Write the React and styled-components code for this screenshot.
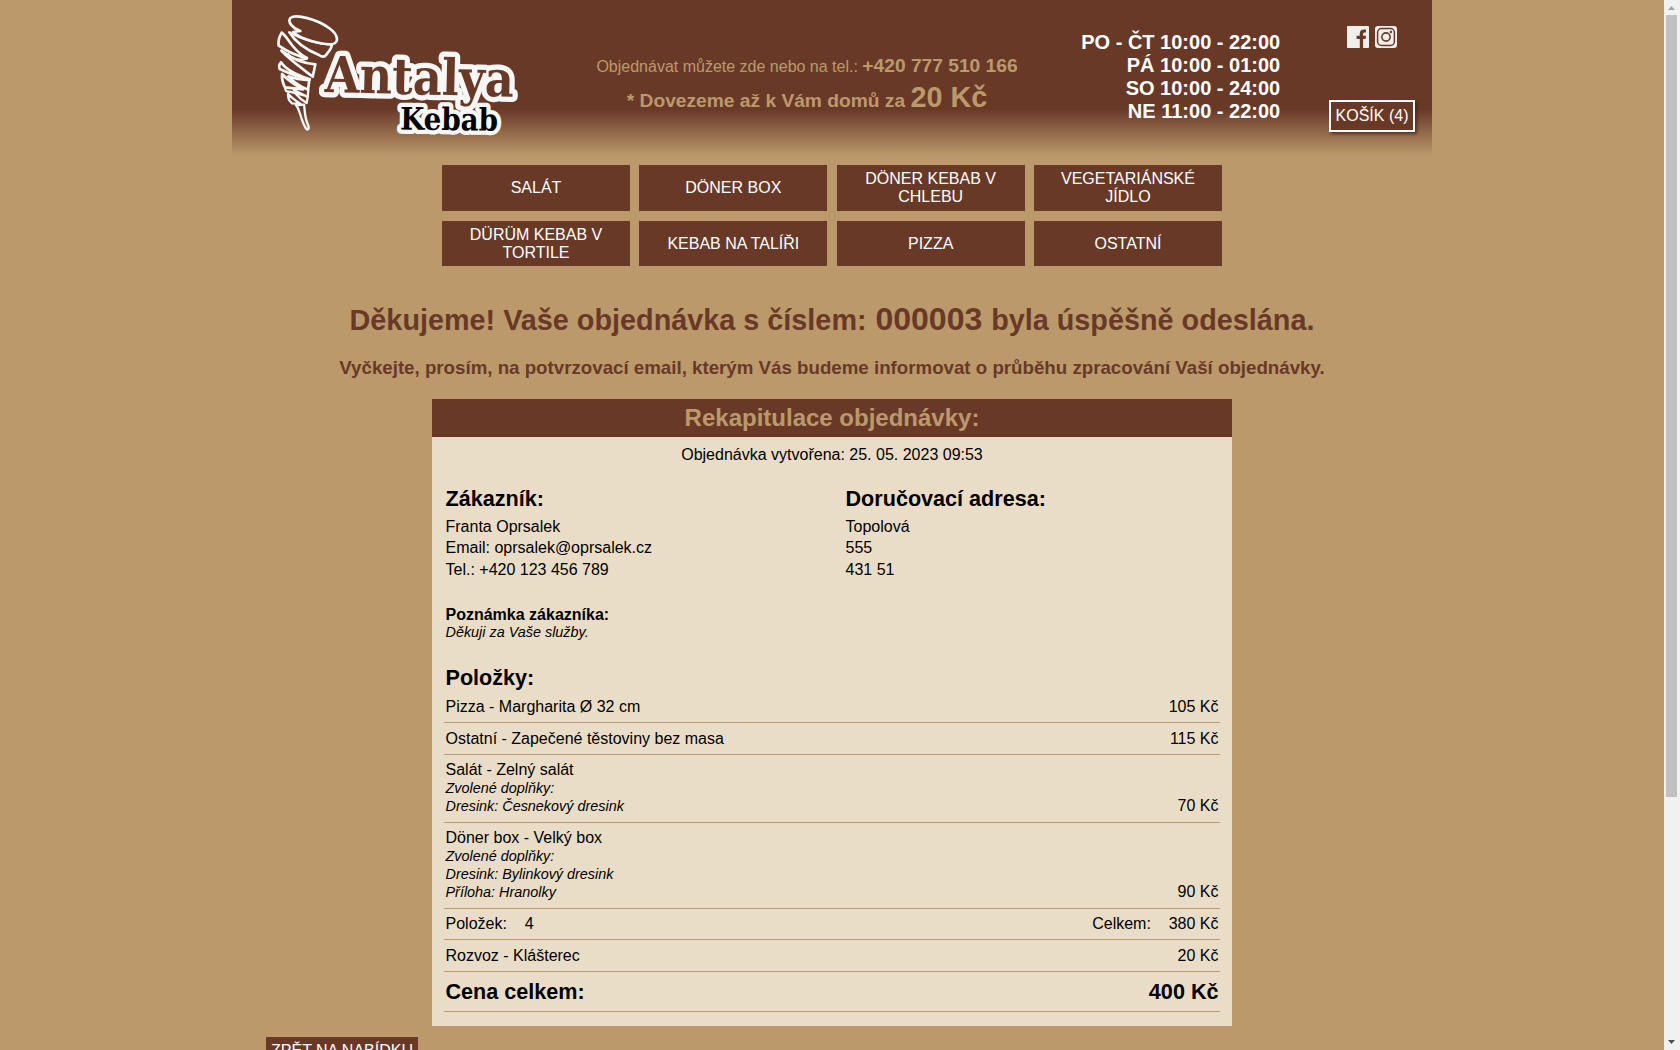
import React from 'react';
import styled, { createGlobalStyle } from 'styled-components';

const brown = '#693928';
const tan = '#bb996b';
const cream = '#eaddc7';

const GlobalStyle = createGlobalStyle`
  * { box-sizing: border-box; }
  html, body { margin: 0; padding: 0; overflow: hidden; background: ${tan}; }
  body { font: 16px/18px "Liberation Sans", Arial, sans-serif; color: #000; }
  h1, h2, h3, h4, p { margin: 0; }
`;

const Viewport = styled.div`
  display: flex;
  height: 1050px;
  overflow: hidden;
`;

const Page = styled.main`
  flex: 1;
  min-width: 0;
  display: flex;
  flex-direction: column;
  align-items: center;
  overflow: hidden;
`;

const Header = styled.header`
  flex: none;
  width: 1200px;
  height: 156px;
  display: flex;
  align-items: flex-start;
  background: linear-gradient(${brown} 70%, ${tan} 100%);
`;

const LogoBox = styled.a`
  width: 320px;
  height: 156px;
  display: block;
`;

const LogoText = styled.text`
  font-family: "DejaVu Serif Condensed", "DejaVu Serif", serif;
  font-weight: bold;
  font-size: ${p => p.$size}px;
  fill: ${p => p.$fill};
  stroke: ${p => p.$stroke || 'none'};
  stroke-width: ${p => p.$width || 0}px;
  stroke-linejoin: round;
`;

const Contact = styled.div`
  width: 510px;
  padding-top: 55px;
  text-align: center;
  color: ${tan};
`;

const Phone = styled.p`
  line-height: 22px;
  strong { font-size: 19.2px; }
`;

const Delivery = styled.p`
  margin-top: 2px;
  font-size: 19.2px;
  font-weight: bold;
  line-height: 34px;
  span { font-size: 28.8px; }
`;

const Hours = styled.div`
  width: 218.2px;
  padding-top: 31px;
  text-align: right;
  font-size: 20px;
  font-weight: bold;
  line-height: 23px;
  color: #fff;
`;

const Side = styled.div`
  flex: 1;
  padding: 26px 17px 0 0;
  display: flex;
  flex-direction: column;
  align-items: flex-end;
`;

const Social = styled.div`
  display: flex;
  gap: 6px;
  height: 22px;
  margin-right: 18px;
`;

const Cart = styled.a`
  width: 86px;
  height: 32px;
  margin-top: 52px;
  border: 2px solid #fff;
  background: ${brown};
  color: #fff;
  line-height: 28px;
  text-align: center;
  white-space: nowrap;
  box-shadow: 2px 2px 3px rgba(60, 25, 15, 0.7);
`;

const Menu = styled.nav`
  flex: none;
  width: 780px;
  margin-top: 9px;
  display: grid;
  grid-template-columns: repeat(4, 188px);
  grid-template-rows: 46px 45px;
  justify-content: space-between;
  row-gap: 10px;
`;

const MenuItem = styled.a`
  display: flex;
  align-items: center;
  justify-content: center;
  padding: 0 20px;
  background: ${brown};
  color: #fff;
  text-align: center;
`;

const Thanks = styled.h1`
  margin-top: 35px;
  font-size: 28.8px;
  line-height: 36px;
  color: ${brown};
  white-space: nowrap;
  span { font-size: 32px; }
`;

const Notice = styled.h2`
  margin-top: 19px;
  font-size: 18.72px;
  line-height: 22px;
  color: ${brown};
  white-space: nowrap;
`;

const Card = styled.section`
  flex: none;
  width: 800px;
  height: 627px;
  margin-top: 20px;
  background: ${cream};
`;

const CardTitle = styled.h2`
  height: 38px;
  background: ${brown};
  color: ${tan};
  font-size: 24px;
  line-height: 38px;
  text-align: center;
`;

const CardBody = styled.div`
  padding: 9px 12px 0;
`;

const Created = styled.p`
  text-align: center;
`;

const Columns = styled.div`
  display: grid;
  grid-template-columns: 400px 1fr;
  margin-top: 22px;
  padding-left: 1.5px;
`;

const Heading = styled.h3`
  font-size: 21.6px;
  line-height: 26px;
`;

const Details = styled.div`
  padding: 3.75px 0 0.25px;
  line-height: 21.5px;
`;

const Note = styled.div`
  margin-top: 25px;
  padding-left: 1.5px;
  strong { display: block; }
`;

const Small = styled.p`
  font-size: 14.4px;
  font-style: italic;
  line-height: 18px;
`;

const NoteText = styled(Small)`
  margin-top: -1px;
`;

const ItemsHeading = styled(Heading)`
  margin-top: 24.5px;
  padding-left: 1.5px;
`;

const Row = styled.div`
  display: flex;
  justify-content: space-between;
  align-items: flex-end;
  height: ${p => p.$height}px;
  padding: 0 1.5px ${p => p.$bottom || 6}px;
  border-bottom: 1px solid ${tan};
`;

const Total = styled(Row)`
  font-size: 21.6px;
  font-weight: bold;
  line-height: 26px;
`;

const Pair = styled.span`
  display: flex;
  gap: 17.8px;
`;

const Back = styled.a`
  flex: none;
  align-self: flex-start;
  margin: 11px 0 0 266px;
  width: 152px;
  height: 32px;
  background: ${brown};
  color: #fff;
  line-height: 28px;
  text-align: center;
  white-space: nowrap;
`;

const Scrollbar = styled.div`
  flex: none;
  width: 16px;
  height: 1050px;
  padding: 5px 3px 6px 2px;
  display: flex;
  flex-direction: column;
  align-items: center;
  background: #f1f1f1;
`;

const Thumb = styled.div`
  width: 11px;
  height: 782px;
  margin: 5px 0 auto;
  background: #c1c1c1;
`;

function Logo() {
  return (
    <svg width="320" height="156" viewBox="232 0 320 156" aria-label="Antalya Kebab">
      <g transform="translate(229.7 0) scale(.33333)" fill="none" stroke="#f7f7f5" strokeWidth="8" strokeLinejoin="round" strokeLinecap="round">
        <path d="M212 93 C190 86 172 66 182 54 C199 41 262 58 298 84 C326 104 329 127 309 132 C284 136 210 118 190 96 L212 93" />
        <path d="M179 97 C196 124 220 146 268 165 C276 171 283 172 288 166 C297 154 305 147 306 136" />
        <path d="M180 98 C212 116 262 133 306 134" strokeWidth="6" />
        <path d="M156 98 C150 108 145 126 147 137 C172 154 204 169 232 174 M156 98 C168 106 177 124 189 138 C204 156 220 168 232 174" />
        <path d="M155 152 C174 174 212 202 249 230 L257 193 C228 191 196 184 155 152" />
        <path d="M176 162 C186 178 204 182 232 176" strokeWidth="6" />
        <path d="M154 187 C148 193 148 202 150 207 C182 222 214 235 240 238 M154 187 C166 205 196 224 240 238" />
        <path d="M157 222 C156 237 161 253 166 262 L220 268 C198 256 174 240 157 222" />
        <path d="M176 229 C198 237 220 241 239 239 L235 269 C214 261 194 248 176 229" />
        <path d="M167 263 C166 272 170 276 180 275 L234 289 L236 270 M192 270 L232 290" strokeWidth="7" />
        <path d="M175 281 C174 294 179 304 187 310 L213 312 C198 302 184 292 175 281 M198 281 C208 293 219 302 231 309 L234 290" strokeWidth="7" />
        <path d="M199 316 C211 326 212 361 230 387 C235 391 239 386 236 377 C223 350 226 330 223 314 L199 316" strokeWidth="7" />
      </g>
      <g transform="rotate(1.4 325 92)">
        <LogoText x="324.500" y="92" textLength="189" lengthAdjust="spacingAndGlyphs" $size={50} $fill="#f7f7f5" $stroke="#f7f7f5" $width={10.5}>Antalya</LogoText>
        <LogoText x="324.500" y="92" textLength="189" lengthAdjust="spacingAndGlyphs" $size={50} $fill={brown}>Antalya</LogoText>
      </g>
      <g transform="rotate(.8 400 129)">
        <LogoText x="400" y="129.500" textLength="98" lengthAdjust="spacingAndGlyphs" $size={31} $fill="#f7f7f5" $stroke="#f7f7f5" $width={8.5}>Kebab</LogoText>
        <LogoText x="400" y="129.500" textLength="98" lengthAdjust="spacingAndGlyphs" $size={31} $fill="#000">Kebab</LogoText>
      </g>
    </svg>
  );
}

const FacebookIcon = () => (
  <svg width="22" height="22" viewBox="0 0 22 22">
    <rect width="22" height="22" rx="0.8" fill="#f0efec" />
    <path d="M19 3.4h-2.2c-2.6 0-4 1.6-4 4v2.4H9.6v3.2h3.2v9h3.3v-9h2.5l.5-3.2h-3V8c0-1 .5-1.5 1.5-1.5H19z" fill={brown} />
  </svg>
);

const InstagramIcon = () => (
  <svg width="22" height="22" viewBox="0 0 22 22" fill="none">
    <rect width="22" height="22" rx="3" fill="#f0efec" />
    <rect x="2.6" y="2.6" width="16.8" height="16.8" rx="4" stroke={brown} strokeWidth="1.5" />
    <circle cx="11" cy="11" r="4.1" stroke={brown} strokeWidth="1.6" />
    <circle cx="15.9" cy="6" r="1.2" fill={brown} />
  </svg>
);

const menu = ['SALÁT', 'DÖNER BOX', 'DÖNER KEBAB V CHLEBU', 'VEGETARIÁNSKÉ JÍDLO', 'DÜRÜM KEBAB V TORTILE', 'KEBAB NA TALÍŘI', 'PIZZA', 'OSTATNÍ'];

const items = [
  { name: 'Pizza - Margharita Ø 32 cm', price: '105 Kč', height: 32 },
  { name: 'Ostatní - Zapečené těstoviny bez masa', price: '115 Kč', height: 32 },
  { name: 'Salát - Zelný salát', extras: ['Zvolené doplňky:', 'Dresink: Česnekový dresink'], price: '70 Kč', height: 68 },
  { name: 'Döner box - Velký box', extras: ['Zvolené doplňky:', 'Dresink: Bylinkový dresink', 'Příloha: Hranolky'], price: '90 Kč', height: 86 },
];

export default function App() {
  return (
    <>
      <GlobalStyle />
      <Viewport>
        <Page>
          <Header>
            <LogoBox><Logo /></LogoBox>
            <Contact>
              <Phone>Objednávat můžete zde nebo na tel.: <strong>+420 777 510 166</strong></Phone>
              <Delivery>* Dovezeme až k Vám domů za <span>20 Kč</span></Delivery>
            </Contact>
            <Hours>
              <div>PO - ČT 10:00 - 22:00</div>
              <div>PÁ 10:00 - 01:00</div>
              <div>SO 10:00 - 24:00</div>
              <div>NE 11:00 - 22:00</div>
            </Hours>
            <Side>
              <Social><FacebookIcon /><InstagramIcon /></Social>
              <Cart>KOŠÍK (4)</Cart>
            </Side>
          </Header>
          <Menu>{menu.map(m => <MenuItem key={m}>{m}</MenuItem>)}</Menu>
          <Thanks>Děkujeme! Vaše objednávka s číslem:<span> 000003 </span>byla úspěšně odeslána.</Thanks>
          <Notice>Vyčkejte, prosím, na potvrzovací email, kterým Vás budeme informovat o průběhu zpracování Vaší objednávky.</Notice>
          <Card>
            <CardTitle>Rekapitulace objednávky:</CardTitle>
            <CardBody>
              <Created>Objednávka vytvořena: 25. 05. 2023 09:53</Created>
              <Columns>
                <div>
                  <Heading>Zákazník:</Heading>
                  <Details>
                    <div>Franta Oprsalek</div>
                    <div>Email: oprsalek@oprsalek.cz</div>
                    <div>Tel.: +420 123 456 789</div>
                  </Details>
                </div>
                <div>
                  <Heading>Doručovací adresa:</Heading>
                  <Details>
                    <div>Topolová</div>
                    <div>555</div>
                    <div>431 51</div>
                  </Details>
                </div>
              </Columns>
              <Note>
                <strong>Poznámka zákazníka:</strong>
                <NoteText>Děkuji za Vaše služby.</NoteText>
              </Note>
              <ItemsHeading>Položky:</ItemsHeading>
              {items.map(i => (
                <Row key={i.name} $height={i.height} $bottom={i.extras ? 7 : 6}>
                  <div>
                    {i.name}
                    {i.extras && i.extras.map(e => <Small key={e}>{e}</Small>)}
                  </div>
                  <span>{i.price}</span>
                </Row>
              ))}
              <Row $height={31}>
                <Pair><span>Položek:</span><span>4</span></Pair>
                <Pair><span>Celkem:</span><span>380 Kč</span></Pair>
              </Row>
              <Row $height={32}><span>Rozvoz - Klášterec</span><span>20 Kč</span></Row>
              <Total $height={40}><span>Cena celkem:</span><span>400 Kč</span></Total>
            </CardBody>
          </Card>
          <Back>ZPĚT NA NABÍDKU</Back>
        </Page>
        <Scrollbar>
          <svg width="7" height="5" viewBox="0 0 7 5"><path d="M0 5L3.5 1L7 5z" fill="#a3a3a3" /></svg>
          <Thumb />
          <svg width="7" height="4" viewBox="0 0 7 4"><path d="M0 0H7L3.5 4z" fill="#505050" /></svg>
        </Scrollbar>
      </Viewport>
    </>
  );
}
